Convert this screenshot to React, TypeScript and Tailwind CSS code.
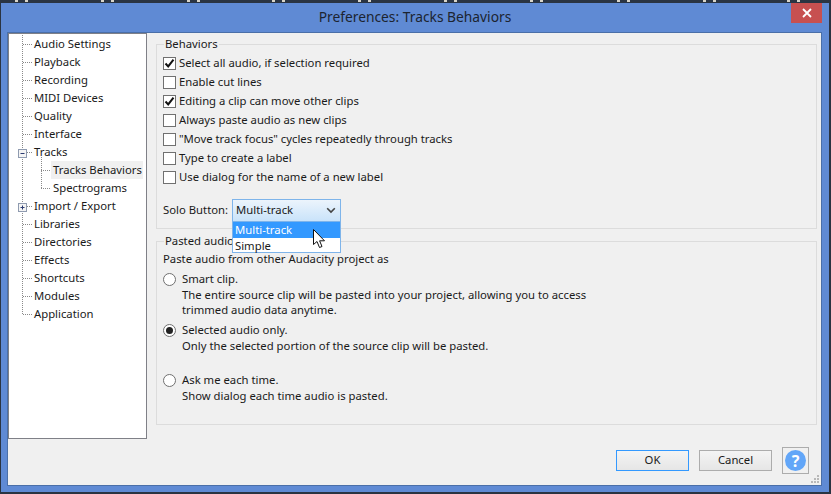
import { ReactNode } from "react";

const treeItems = [
  { label: "Audio Settings" },
  { label: "Playback" },
  { label: "Recording" },
  { label: "MIDI Devices" },
  { label: "Quality" },
  { label: "Interface" },
  { label: "Tracks", box: "minus" },
  { label: "Tracks Behaviors", child: true, selected: true },
  { label: "Spectrograms", child: true, last: true },
  { label: "Import / Export", box: "plus" },
  { label: "Libraries" },
  { label: "Directories" },
  { label: "Effects" },
  { label: "Shortcuts" },
  { label: "Modules" },
  { label: "Application", end: true },
];

const behaviors = [
  { label: "Select all audio, if selection required", checked: true },
  { label: "Enable cut lines" },
  { label: "Editing a clip can move other clips", checked: true },
  { label: "Always paste audio as new clips" },
  { label: '"Move track focus" cycles repeatedly through tracks' },
  { label: "Type to create a label" },
  { label: "Use dialog for the name of a new label" },
];

const ticks = [15, 101, 187, 272, 358, 444, 530, 617, 703, 787];

type TreeItem = (typeof treeItems)[number] & {
  box?: string;
  child?: boolean;
  selected?: boolean;
  last?: boolean;
  end?: boolean;
};

function TreeConnector({ item }: { item: TreeItem }) {
  const dots = { stroke: "#8a8a8a", strokeDasharray: "1 1", fill: "none" };
  return (
    <svg width="52" height="18" className="shrink-0">
      <path d={`M13.5 0V${item.end ? 9 : 18}`} {...dots} />
      {item.child ? (
        <path d={`M32.5 0V${item.last ? 9 : 18}M32 9.5H41`} {...dots} />
      ) : (
        <path d="M14 9.5H24" {...dots} />
      )}
      {item.label === "Tracks" && <path d="M32.5 14V18" {...dots} />}
      {item.box && (
        <g>
          <rect x="9.5" y="6.5" width="8" height="8" fill="#f4f4f4" stroke="#8f9bb0" />
          <path
            d={item.box === "plus" ? "M11.5 10.5H15.5M13.5 8.5V12.5" : "M11.5 10.5H15.5"}
            stroke="#2a3a70"
          />
        </g>
      )}
    </svg>
  );
}

function TreeRow({ item }: { item: TreeItem }) {
  return (
    <div className="flex h-[18px] items-center leading-[18px] whitespace-nowrap">
      <TreeConnector item={item} />
      {item.child ? (
        <span className={`-ml-[10px] px-[2px] w-[92px] ${item.selected ? "bg-[#f0f0f0]" : ""}`}>{item.label}</span>
      ) : (
        <span className="-ml-[27px]">{item.label}</span>
      )}
    </div>
  );
}

function Checkbox({ label, checked }: { label: string; checked?: boolean }) {
  return (
    <div className="flex h-[19px] items-center gap-[3px]">
      <div className="flex h-[13px] w-[13px] items-center justify-center border border-[#707070] bg-white">
        {checked && (
          <svg width="11" height="11" viewBox="0 0 11 11">
            <path d="M1.5 5.5L4.2 8.4L9.5 1.6" fill="none" stroke="#111" strokeWidth="2" />
          </svg>
        )}
      </div>
      <span className="-mt-[1px]">{label}</span>
    </div>
  );
}

function Radio({ title, lines, checked, className }: { title: string; lines: string[]; checked?: boolean; className?: string }) {
  return (
    <div className={`flex gap-[6px] ${className ?? ""}`}>
      <div className="mt-[2px] flex h-[13px] w-[13px] shrink-0 items-center justify-center rounded-full border border-[#707070] bg-white">
        {checked && <div className="h-[7px] w-[7px] rounded-full bg-[#222]" />}
      </div>
      <div>
        <div className="h-[16px] leading-[16px]">{title}</div>
        {lines.map((l) => (
          <div key={l} className="h-[15px] leading-[15px] whitespace-nowrap">
            {l}
          </div>
        ))}
      </div>
    </div>
  );
}

function Group({ legend, className, children }: { legend: string; className: string; children: ReactNode }) {
  return (
    <fieldset className={`border border-[#dcdcdc] ${className}`}>
      <legend className="ml-[1px] h-[16px] px-[1px] leading-[16px]">{legend}</legend>
      {children}
    </fieldset>
  );
}

export default function App() {
  return (
    <div className="h-[494px] w-[831px] overflow-hidden bg-[#2a3442] text-[11.3px] text-[#1a1a1a] [font-family:'Noto_Sans',sans-serif]">
      <svg width="831" height="3" className="block">
        {ticks.map((x) => (
          <path key={x} d={`M${x} 0h3v2h-3zM${x + 10} 0h3v2h-3z`} fill="#d8d4c8" />
        ))}
      </svg>
      <div className="mx-[1px] flex h-[489px] w-[828px] flex-col bg-[#5f8ad4]">
        <div className="relative flex h-[29px] shrink-0 items-center justify-center text-[13.8px] text-[#1c2430]">
          Preferences: Tracks Behaviors
          <div className="absolute right-[7px] top-0 flex h-[20px] w-[31px] items-center justify-center bg-[#c75050]">
            <svg width="10" height="10" viewBox="0 0 10 10">
              <path d="M1 1L9 9M9 1L1 9" stroke="#fff" strokeWidth="1.8" />
            </svg>
          </div>
        </div>

        <div className="relative ml-[6px] mr-[7px] flex h-[454px] flex-col border border-[#4a6fa8] bg-[#f0f0f0]">
          <div className="flex h-[406px] shrink-0">
            <div className="w-[139px] shrink-0 border border-[#7f8087] bg-white pt-[1px]">
              {treeItems.map((t) => (
                <TreeRow key={t.label} item={t as TreeItem} />
              ))}
            </div>
            <div className="flex-1 pl-[9px] pr-[4px] pt-[3px]">
              <Group legend="Behaviors" className="h-[193px] pl-[6px]">
                <div className="pt-[2px]">
                  {behaviors.map((b) => (
                    <Checkbox key={b.label} label={b.label} checked={b.checked} />
                  ))}
                </div>
                <div className="relative z-10 mt-[12px] flex h-[23px] items-center">
                  <span className="w-[69px] whitespace-nowrap">Solo Button:</span>
                  <div className="relative">
                    <div className="flex h-[23px] w-[109px] items-center justify-between border border-[#7eb4ea] bg-gradient-to-b from-[#ecf4fc] to-[#c9e3fa] pl-[3px] pr-[4px]">
                      <span>Multi-track</span>
                      <svg width="10" height="7" viewBox="0 0 10 7">
                        <path d="M1.2 1.2L5 5L8.8 1.2" fill="none" stroke="#444" strokeWidth="1.6" />
                      </svg>
                    </div>
                    <div className="absolute left-0 top-[23px] h-[31px] w-[109px] border border-t-0 border-[#7eb4ea] bg-white">
                      <div className="h-[16px] bg-[#3399ff] pl-[2px] leading-[16px] text-white">Multi-track</div>
                      <div className="h-[15px] pl-[2px] leading-[15px]">Simple</div>
                    </div>
                    <svg width="14" height="20" viewBox="0 0 14 20" className="absolute left-[81px] top-[30px]">
                      <path
                        d="M0.5 0.5V15.5L4 12.5L6.5 18.5L9 17.5L6.6 11.8H11.5Z"
                        fill="#fff"
                        stroke="#111"
                      />
                    </svg>
                  </div>
                </div>
              </Group>
              <Group legend="Pasted audio" className="mt-[4px] h-[192px] pl-[6px]">
                <div className="mt-[2px] h-[16px] leading-[16px]">Paste audio from other Audacity project as</div>
                <Radio
                  className="mt-[4px]"
                  title="Smart clip."
                  lines={[
                    "The entire source clip will be pasted into your project, allowing you to access",
                    "trimmed audio data anytime.",
                  ]}
                />
                <Radio
                  className="mt-[5px]"
                  checked
                  title="Selected audio only."
                  lines={["Only the selected portion of the source clip will be pasted."]}
                />
                <Radio
                  className="mt-[19px]"
                  title="Ask me each time."
                  lines={["Show dialog each time audio is pasted."]}
                />
              </Group>
            </div>
          </div>
          <div className="flex flex-1 items-center justify-end gap-[10px] pr-[12px] pb-[3px]">
            <button className="h-[21px] w-[73px] border border-[#3399ff] bg-gradient-to-b from-[#f4f4f4] to-[#e6e6e6] text-center">OK</button>
            <button className="h-[21px] w-[73px] border border-[#acacac] bg-gradient-to-b from-[#f4f4f4] to-[#e6e6e6] text-center">Cancel</button>
            <div className="flex h-[27px] w-[27px] items-center justify-center border border-[#acacac]">
              <div className="flex h-[21px] w-[21px] items-center justify-center rounded-full bg-[#62a6f8] text-[16px] font-bold text-white">?</div>
            </div>
          </div>
          <svg width="9" height="9" className="absolute bottom-[1px] right-[1px]">
            <path d="M6 0h2v2H6zM3 3h2v2H3zM6 3h2v2H6zM0 6h2v2H0zM3 6h2v2H3zM6 6h2v2H6z" fill="#b8b8b8" />
          </svg>
        </div>
      </div>
    </div>
  );
}
